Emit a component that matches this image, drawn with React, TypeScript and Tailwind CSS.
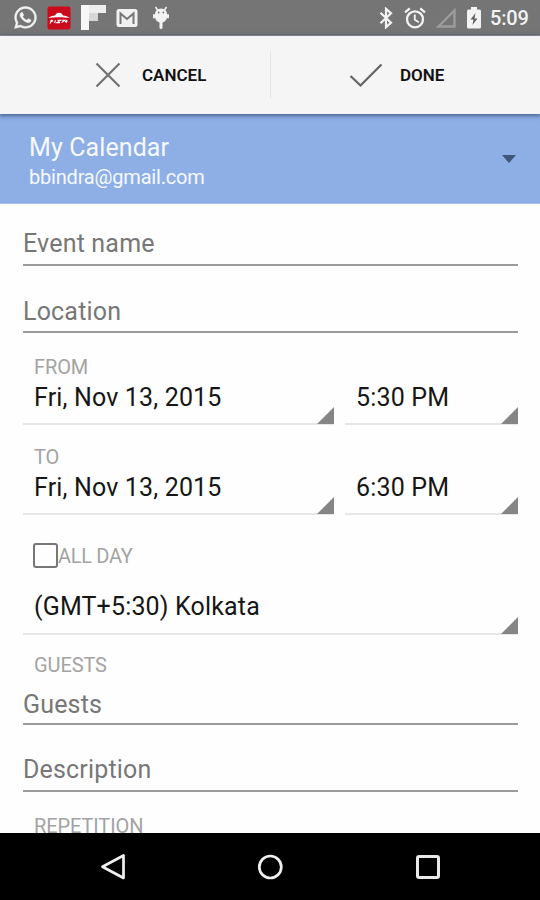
import React from "react";
import { FaWhatsapp } from "react-icons/fa";

function StatusBar() {
  return (
    <div className="flex h-9 shrink-0 items-center border-b border-[#999999] bg-[#757575] pl-[13px] pr-[11px] text-[#f3f3f3]">
      <FaWhatsapp size={25} className="mr-[9px] shrink-0" stroke="currentColor" strokeWidth={10} />
      <svg width="24" height="24" viewBox="0 0 24 24" className="mr-[10px] shrink-0">
        <rect x="0.5" y="0.5" width="23" height="23" rx="2" fill="#cb0a1c" />
        <path d="M1.500 12c1.500-1.500 4-2.300 6.500-2.500L9.500 7.500c1.800-1 3.500-1 5 0l1.500 2c2.500.2 5 1 6.500 2.500-6-1-15-1-21 0z" fill="#fff" />
        <path d="M3 17.500l1.500-3.500M3.500 14.500c3-1 2.800.6.6 1.200M8.500 14.200L7.500 17M10.500 14.300h3l-3.500 2.300h3M15 14.300h3l-3.500 2.300M20 14l-1 3M18 15.500h2.500" stroke="#fff" strokeWidth="1.100" fill="none" />
      </svg>
      <svg width="25" height="25" viewBox="0 0 25 25" className="mr-[10px] shrink-0">
        <path d="M0 0h25v8h-8v8H8v9H0z" fill="#f7f7f7" />
        <path d="M8 8h9v8H8z" fill="#d7d7d7" />
        <path d="M8 0h17v8H8z" fill="#ededed" />
      </svg>
      <svg width="22" height="18" viewBox="0 0 22 18" className="mr-[14px] shrink-0">
        <rect x="0.500" y="0" width="21" height="18" rx="2.500" fill="#f1f1f1" />
        <path d="M4.500 15V4.500L11 10l6.500-5.500V15" fill="none" stroke="#777" strokeWidth="2" />
      </svg>
      <svg width="18" height="25" viewBox="0 0 18 25" className="shrink-0">
        <path d="M3.500 2l2 3M14.500 2l-2 3" stroke="#f3f3f3" strokeWidth="1.500" />
        <path d="M3 9a6 5.500 0 0 1 12 0V12a6 5.500 0 0 1-12 0z" fill="#f3f3f3" />
        <path d="M2 10v2.500M16 10v2.500" stroke="#f3f3f3" strokeWidth="2" strokeLinecap="round" />
        <path d="M9 16v6.500" stroke="#f3f3f3" strokeWidth="3" strokeLinecap="round" />
        <circle cx="6.700" cy="7.500" r=".9" fill="#757575" />
        <circle cx="11.300" cy="7.500" r=".9" fill="#757575" />
      </svg>
      <div className="grow" />
      <svg width="14" height="22" viewBox="0 0 14 22" className="mr-[11px] shrink-0">
        <path d="M1.500 5.800L12 15.800 7 20.200V1.800L12 6.200 1.500 16.200" fill="none" stroke="#f3f3f3" strokeWidth="2.200" />
      </svg>
      <svg width="22" height="22" viewBox="0 0 22 22" className="mr-[9px] shrink-0">
        <circle cx="11" cy="12.300" r="8" fill="none" stroke="#f3f3f3" strokeWidth="2.300" />
        <path d="M1 5.300L5.800 1.300M21 5.300L16.200 1.300" stroke="#f3f3f3" strokeWidth="2.200" />
        <path d="M10.800 7.500v5.300l4 2.400" fill="none" stroke="#f3f3f3" strokeWidth="1.800" />
      </svg>
      <svg width="22" height="22" viewBox="0 0 22 22" className="mr-[9px] shrink-0">
        <path d="M3.500 19.500H19.500V3.500z" fill="none" stroke="#9c9c9c" strokeWidth="2.400" />
      </svg>
      <svg width="16" height="22" viewBox="0 0 16 22" className="mr-[8px] shrink-0">
        <path d="M5 0h6v2.500h2.500a1.500 1.500 0 0 1 1.500 1.500v16a1.500 1.500 0 0 1-1.500 1.500h-11A1.500 1.500 0 0 1 1 20V4a1.500 1.500 0 0 1 1.500-1.500H5z" fill="#f3f3f3" />
        <path d="M9.500 6L4.500 12.500h3L6.500 18l5-6.500h-3z" fill="#606060" />
      </svg>
      <span className="w-[39px] whitespace-nowrap pt-px text-[20px] font-medium leading-6 tracking-[-0.2px]">5:09</span>
    </div>
  );
}

function ActionBar() {
  return (
    <div className="z-10 flex h-[78px] shrink-0 items-center bg-[#f5f5f5] text-[17px] font-semibold text-[#111] shadow-[0_1px_4px_1px_rgba(30,50,90,0.6)]">
      <div className="flex h-full w-[270px] items-center pl-[95px]">
        <svg width="26" height="26" viewBox="0 0 26 26" className="mr-[21px]">
          <path d="M1.500 1.500l23 23M24.500 1.500l-23 23" stroke="#737373" strokeWidth="2.200" />
        </svg>
        <span className="leading-6">CANCEL</span>
      </div>
      <div className="h-[46px] w-px bg-[#e4e4e4]" />
      <div className="flex h-full items-center pl-[78px]">
        <svg width="34" height="26" viewBox="0 0 34 26" className="mr-[17px]">
          <path d="M1.500 14l10 9.500L32.500 2.500" stroke="#666" strokeWidth="2.300" fill="none" />
        </svg>
        <span className="leading-6">DONE</span>
      </div>
    </div>
  );
}

function Corner() {
  return (
    <svg width="17" height="17" viewBox="0 0 17 17" className="-mb-px shrink-0 self-end">
      <path d="M17 0v17H0z" fill="#858585" />
    </svg>
  );
}

function Label({ children, className }: { children: React.ReactNode; className: string }) {
  return (
    <div className={"shrink-0 pl-[11px] text-[20px] leading-6 tracking-[-0.1px] text-[#a3a3a3] " + className}>{children}</div>
  );
}

function Input({ children, className }: { children: React.ReactNode; className: string }) {
  return (
    <div className={"shrink-0 border-b-2 border-[#9b9b9b] text-[25px] leading-[30px] tracking-[0.18px] text-[#777] " + className}>{children}</div>
  );
}

function Picker({ children, className }: { children: React.ReactNode; className: string }) {
  return (
    <div className={"flex shrink-0 justify-between border-b-2 border-[#e6e6e6] pl-[11px] text-[25px] leading-[30px] tracking-[0.16px] text-[#161616] " + className}>
      <span className="whitespace-nowrap">{children}</span>
      <Corner />
    </div>
  );
}

export default function App() {
  return (
    <div className="flex h-[900px] w-[540px] flex-col overflow-hidden bg-white font-['Roboto',sans-serif]">
      <StatusBar />
      <ActionBar />
      <div className="flex h-[90px] shrink-0 items-start justify-between border-b border-[#a9c1ed] bg-[#8eafe6] pl-[29px] pr-[24px] pt-[19px] text-[#f6f9ff]">
        <div>
          <div className="text-[25px] leading-[30px] tracking-[0.1px]">My Calendar</div>
          <div className="mt-[2px] text-[20px] leading-6 tracking-[-0.2px]">bbindra@gmail.com</div>
        </div>
        <svg width="14" height="8" viewBox="0 0 14 8" className="mt-[22px]">
          <path d="M0 0h14L7 8z" fill="#3f5778" />
        </svg>
      </div>
      <div className="flex min-h-0 grow flex-col overflow-hidden bg-[#fefefe] pl-[23px] pr-[22px]">
        <Input className="h-[62px] pt-[25px]">Event name</Input>
        <Input className="h-[67px] pt-[31px]">Location</Input>
        <Label className="mt-[22px]">FROM</Label>
        <div className="flex shrink-0 gap-[11px]">
          <Picker className="h-[46px] w-[311px] pt-[4px]">Fri, Nov 13, 2015</Picker>
          <Picker className="h-[46px] w-[173px] pt-[4px]">5:30 PM</Picker>
        </div>
        <Label className="mt-[20px]">TO</Label>
        <div className="flex shrink-0 gap-[11px]">
          <Picker className="h-[46px] w-[311px] pt-[4px]">Fri, Nov 13, 2015</Picker>
          <Picker className="h-[46px] w-[173px] pt-[4px]">6:30 PM</Picker>
        </div>
        <div className="mt-[28px] flex h-[25px] shrink-0 pl-[10px]">
          <div className="h-[25px] w-[25px] rounded-[3px] border-2 border-[#777]" />
          <span className="pt-px text-[20px] leading-6 tracking-[-0.3px] text-[#a3a3a3]">ALL DAY</span>
        </div>
        <Picker className="h-[67px] pt-[24px]">(GMT+5:30) Kolkata</Picker>
        <Label className="mt-[18px]">GUESTS</Label>
        <Input className="h-[48px] pt-[13px]">Guests</Input>
        <Input className="h-[67px] pt-[30px]">Description</Input>
        <Label className="mt-[22px]">REPETITION</Label>
      </div>
      <div className="flex h-[67px] shrink-0 items-center bg-black pl-[100px]">
        <svg width="26" height="28" viewBox="0 0 26 28">
          <path d="M23.500 2.500v22.500L2.500 13.700z" fill="none" stroke="#f0f0f0" strokeWidth="2.700" strokeLinejoin="round" />
        </svg>
        <svg width="26" height="26" viewBox="0 0 26 26" className="ml-[131px]">
          <circle cx="13.300" cy="13" r="11" fill="none" stroke="#f0f0f0" strokeWidth="2.700" />
        </svg>
        <div className="ml-[133px] h-6 w-6 rounded-[3px] border-[3px] border-[#e8e8e8]" />
      </div>
    </div>
  );
}
